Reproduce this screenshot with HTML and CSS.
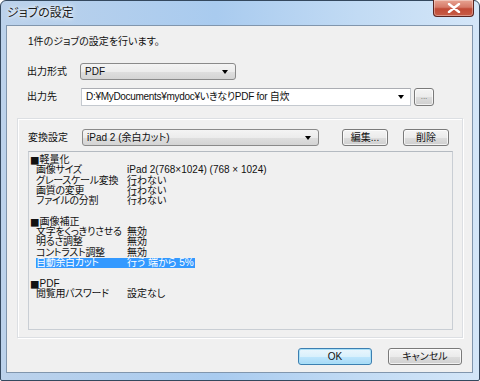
FILE: index.html
```html
<!DOCTYPE html>
<html lang="ja">
<head>
<meta charset="utf-8">
<link rel="stylesheet" href="styles.css">
</head>
<body>
<div class="window">
  <div class="titlebar">
    <span class="title">ジョブの設定</span>
    <span class="close"><svg width="14" height="10" viewBox="0 0 14 10"><path d="M2 1 L12 9 M12 1 L2 9" stroke="#fff" stroke-width="2.4" stroke-linecap="round"/></svg></span>
  </div>
  <div class="client">
    <div class="intro">1件のジョブの設定を行います。</div>
    <div class="row row-format">
      <span class="label">出力形式</span>
      <div class="combo combo-format"><span>PDF</span><i class="arrow"></i></div>
    </div>
    <div class="row row-dest">
      <span class="label">出力先</span>
      <div class="edit-combo"><span class="path">D:¥MyDocuments¥mydoc¥いきなりPDF for 自炊</span><i class="arrow"></i></div>
      <button class="btn btn-dots">...</button>
    </div>
    <div class="group">
      <div class="row row-conv">
        <span class="label">変換設定</span>
        <div class="combo combo-conv"><span>iPad 2 (余白カット)</span><i class="arrow"></i></div>
        <button class="btn btn-edit">編集...</button>
        <button class="btn btn-del">削除</button>
      </div>
      <div class="listbox">
        <div class="head"><span class="sq">■</span>軽量化</div>
        <div class="item"><span class="k">画像サイズ</span><span class="v">iPad 2(768×1024) (768 × 1024)</span></div>
        <div class="item"><span class="k">グレースケール変換</span><span class="v">行わない</span></div>
        <div class="item"><span class="k">画質の変更</span><span class="v">行わない</span></div>
        <div class="item"><span class="k">ファイルの分割</span><span class="v">行わない</span></div>
        <div class="blank"></div>
        <div class="head"><span class="sq">■</span>画像補正</div>
        <div class="item"><span class="k">文字をくっきりさせる</span><span class="v">無効</span></div>
        <div class="item"><span class="k">明るさ調整</span><span class="v">無効</span></div>
        <div class="item"><span class="k">コントラスト調整</span><span class="v">無効</span></div>
        <div class="item sel"><span class="k">自動余白カット</span><span class="v">行う 端から 5%</span></div>
        <div class="blank"></div>
        <div class="head"><span class="sq">■</span>PDF</div>
        <div class="item"><span class="k">閲覧用パスワード</span><span class="v">設定なし</span></div>
      </div>
    </div>
    <div class="footer">
      <button class="btn btn-ok">OK</button>
      <button class="btn btn-cancel">キャンセル</button>
    </div>
  </div>
</div>
</body>
</html>
```

FILE: styles.css
```css
* { box-sizing: border-box; }
html, body { margin: 0; padding: 0; background: #fff; }
body {
  font-family: "Liberation Sans", "Noto Sans CJK JP", sans-serif;
  font-size: 10px;
  font-feature-settings: "palt";
  color: #111;
}
.window {
  width: 480px;
  height: 381px;
  border: 1px solid #34485e;
  border-radius: 6px 6px 2px 2px;
  background: linear-gradient(to right, #bcd2eb 0%, #a9cbef 45%, #c2dbf4 75%, #d4e6f8 100%);
  display: flex;
  flex-direction: column;
}
.titlebar {
  height: 24px;
  display: flex;
  justify-content: space-between;
  align-items: flex-start;
  padding-left: 6px;
}
.title {
  font-size: 12px;
  line-height: 12px;
  margin-top: 6px;
  color: #1a1a1a;
  text-shadow: 0 0 6px #fff, 0 0 3px #fff;
}
.close {
  width: 41px;
  height: 17px;
  margin-right: 5px;
  margin-top: -1px;
  border: 1px solid #5a2420;
  border-top: none;
  border-radius: 0 0 4px 4px;
  background: linear-gradient(#e8a493 0%, #d67a68 45%, #c14a36 55%, #c75c46 100%);
  box-shadow: inset 0 0 0 1px rgba(255,255,255,0.35);
  display: flex;
  align-items: center;
  justify-content: center;
}
.client {
  margin: 0 6px 7px 5px;
  flex: 1;
  background: #f0f0f0;
  border: 1px solid #8196ad;
  padding: 10px 10px 0 10px;
  display: flex;
  flex-direction: column;
}
.intro {
  margin-left: 11px;
  height: 12px;
  line-height: 12px;
}
.row { display: flex; align-items: center; }
.label { line-height: 12px; }
.row-format { margin-top: 15px; height: 17px; margin-left: 10px; }
.row-format .label { width: 53px; }
.combo {
  height: 17px;
  border: 1px solid #8a8a8a;
  border-radius: 3px;
  background: linear-gradient(#f4f4f4 0%, #ececec 50%, #dfdfdf 51%, #d4d4d4 100%);
  display: flex;
  align-items: center;
  justify-content: space-between;
  padding: 0 7px 0 4px;
  line-height: 12px;
}
.combo-format { width: 156px; }
.arrow {
  width: 0; height: 0;
  border-left: 3px solid transparent;
  border-right: 3px solid transparent;
  border-top: 4px solid #000;
  display: block;
}
.row-dest { margin-top: 8px; height: 18px; margin-left: 10px; }
.row-dest .label { width: 54px; }
.edit-combo {
  width: 330px;
  height: 18px;
  background: #fff;
  border: 1px solid #c4c9cf;
  border-top-color: #abadb3;
  display: flex;
  align-items: center;
  justify-content: space-between;
  padding: 0 6px 0 4px;
  line-height: 12px;
}
.path { letter-spacing: -0.3px; }
.btn {
  font-family: inherit;
  font-size: 10px;
  font-feature-settings: "palt";
  color: #111;
  border: 1px solid #7a7a7a;
  border-radius: 3px;
  background: linear-gradient(#f4f4f4 0%, #ebebeb 50%, #dddddd 51%, #cfcfcf 100%);
  box-shadow: inset 0 0 0 1px rgba(255,255,255,0.7);
  padding: 0;
  line-height: 12px;
  height: 17px;
}
.btn-dots { width: 20px; height: 18px; margin-left: 3px; font-size: 8px; color: #666; }
.group {
  margin-top: 12px;
  width: 446px;
  height: 220px;
  border: 1px solid #dcdfe3;
  box-shadow: inset 1px 1px 0 #fff, 1px 1px 0 #fff;
  padding: 10px 9px 0 10px;
}
.row-conv { height: 17px; }
.row-conv .label { width: 54px; }
.combo-conv { width: 237px; }
.btn-edit { width: 46px; margin-left: 23px; }
.btn-del { width: 46px; margin-left: 15px; }
.listbox {
  margin-top: 5px;
  width: 425px;
  height: 179px;
  border: 1px solid #c9ced4;
  border-top-color: #b4bac1;
  padding: 3px 1px 0 1px;
  line-height: 10.3px;
  font-size: 10px;
}
.head { height: 10.3px; white-space: nowrap; display: flex; align-items: center; }
.sq { font-family: "Noto Sans CJK JP", sans-serif; font-feature-settings: normal; font-size: 9.5px; line-height: 10px; }
.blank { height: 10.3px; }
.item { display: flex; width: fit-content; margin-left: 6px; height: 10.3px; white-space: nowrap; }
.item .k { width: 91px; letter-spacing: -0.3px; }
.item.sel { background: #3399ff; color: #fff; padding-right: 1px; }
.footer {
  display: flex;
  justify-content: flex-end;
  margin-top: 10px;
  gap: 16px;
}
.btn-ok, .btn-cancel { width: 74px; height: 17px; }
.btn-ok {
  border-color: #3c7fb1;
  background: linear-gradient(#eaf6fd 0%, #d9f0fc 50%, #bee6fd 51%, #a7d9f5 100%);
  box-shadow: inset 0 0 0 1px #a8e0f8;
}
```
